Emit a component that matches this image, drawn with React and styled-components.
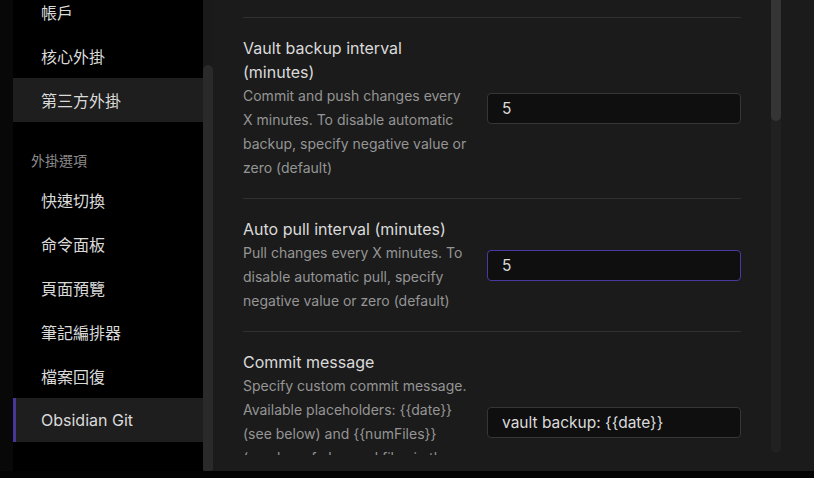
import React from "react";
import styled, { createGlobalStyle } from "styled-components";

const GlobalStyle = createGlobalStyle`
  html, body {
    margin: 0;
    padding: 0;
    background: #050505;
  }
  * {
    box-sizing: border-box;
  }
`;

const Screen = styled.div`
  width: 814px;
  height: 478px;
  overflow: hidden;
  background: #030303;
  font-family: Inter, "Noto Sans CJK TC", sans-serif;
  display: flex;
  flex-direction: column;
`;

const Window = styled.div`
  height: 471px;
  display: flex;
`;

const Gutter = styled.div`
  width: 13px;
  background: #080808;
`;

const Sidebar = styled.div`
  width: 190px;
  background: #000000;
  overflow: hidden;
`;

const NavList = styled.div`
  margin-top: -10px;
  display: flex;
  flex-direction: column;
`;

const NavItem = styled.div`
  height: 44px;
  display: flex;
  align-items: center;
  padding-left: ${(props) => (props.$active ? "25px" : "28px")};
  border-left: ${(props) => (props.$active ? "3px solid #483699" : "none")};
  background: ${(props) => (props.$selected ? "#1e1e1e" : "transparent")};
  color: #dadada;
  font-size: 16px;
  cursor: pointer;
`;

const NavHeading = styled.div`
  padding: 30px 0 8px 18px;
  line-height: 18px;
  font-size: 14px;
  color: #8a8a8a;
`;

const ScrollTrack = styled.div`
  width: 10px;
  display: flex;
  flex-direction: column;
  background: ${(props) => props.$bg};
`;

const ScrollThumb = styled.div`
  background: ${(props) => props.$color};
  border-radius: ${(props) => props.$radius};
  height: ${(props) => props.$height};
  margin-top: ${(props) => props.$offset || "0"};
  flex: ${(props) => (props.$grow ? 1 : "none")};
`;

const Main = styled.div`
  flex: 1;
  display: flex;
  align-items: flex-start;
  background: #1b1b1b;
`;

const Content = styled.div`
  flex: 1;
  height: 455px;
  padding: 17px 30px 0 30px;
  overflow: hidden;
`;

const SettingItem = styled.div`
  border-top: 1px solid #303030;
  padding: 18px 0;
  display: flex;
  align-items: center;
  gap: 16px;
`;

const SettingInfo = styled.div`
  width: 228px;
  flex: none;
`;

const SettingName = styled.div`
  font-size: 16px;
  line-height: 24px;
  color: #dadada;
`;

const SettingDesc = styled.div`
  font-size: 14px;
  line-height: 24px;
  color: #959595;
`;

const TextInput = styled.input`
  width: 254px;
  height: 31px;
  flex: none;
  background: #0f0f0f;
  border: 1px solid ${(props) => (props.$focused ? "#4a38a3" : "#363636")};
  border-radius: 4px;
  padding: 0 14px;
  color: #dadada;
  font-family: Inter, sans-serif;
  font-size: 15.5px;
  outline: none;
`;

const MainTrack = styled(ScrollTrack)`
  height: 453px;
  margin-right: 33px;
  border-radius: 0 0 5px 5px;
`;

const navTop = [
  { label: "帳戶" },
  { label: "核心外掛" },
  { label: "第三方外掛", selected: true },
];

const navPlugins = [
  { label: "快速切換" },
  { label: "命令面板" },
  { label: "頁面預覽" },
  { label: "筆記編排器" },
  { label: "檔案回復" },
  { label: "Obsidian Git", selected: true, active: true },
];

const settings = [
  {
    name: "Vault backup interval (minutes)",
    desc: "Commit and push changes every X minutes. To disable automatic backup, specify negative value or zero (default)",
    value: "5",
  },
  {
    name: "Auto pull interval (minutes)",
    desc: "Pull changes every X minutes. To disable automatic pull, specify negative value or zero (default)",
    value: "5",
    focused: true,
  },
  {
    name: "Commit message",
    desc: "Specify custom commit message. Available placeholders: {{date}} (see below) and {{numFiles}} (number of changed files in the commit)",
    value: "vault backup: {{date}}",
  },
];

const App = () => {
  return (
    <>
      <GlobalStyle />
      <Screen>
        <Window>
          <Gutter />
          <Sidebar>
            <NavList>
              {navTop.map((item) => (
                <NavItem key={item.label} $selected={item.selected}>
                  {item.label}
                </NavItem>
              ))}
              <NavHeading>外掛選項</NavHeading>
              {navPlugins.map((item) => (
                <NavItem
                  key={item.label}
                  $selected={item.selected}
                  $active={item.active}
                >
                  {item.label}
                </NavItem>
              ))}
            </NavList>
          </Sidebar>
          <ScrollTrack $bg="#1a1a1a">
            <ScrollThumb
              $color="#2a2a2a"
              $radius="5px 5px 2px 2px"
              $offset="65px"
              $grow
            />
          </ScrollTrack>
          <Main>
            <Content>
              {settings.map((s) => (
                <SettingItem key={s.name}>
                  <SettingInfo>
                    <SettingName>{s.name}</SettingName>
                    <SettingDesc>{s.desc}</SettingDesc>
                  </SettingInfo>
                  <TextInput
                    $focused={s.focused}
                    defaultValue={s.value}
                    spellCheck={false}
                  />
                </SettingItem>
              ))}
            </Content>
            <MainTrack $bg="#212121">
              <ScrollThumb $color="#353535" $radius="0 0 5px 5px" $height="121px" />
            </MainTrack>
          </Main>
        </Window>
      </Screen>
    </>
  );
};

export default App;
